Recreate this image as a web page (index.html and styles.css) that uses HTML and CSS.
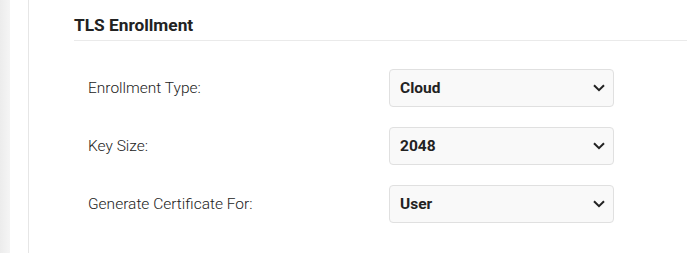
FILE: index.html
```html
<!DOCTYPE html>
<html lang="en">
<head>
  <meta charset="UTF-8"/>
  <title>TLS Enrollment</title>
  <link rel="stylesheet" href="styles.css">
</head>
<body>
  <div class="page">
    <div class="sidebar"></div>
    <div class="main">
      <div class="section">
        <h2 class="section-title">TLS Enrollment</h2>
        <div class="form">
          <div class="row">
            <label class="label">Enrollment Type:</label>
            <div class="select">
              <span>Cloud</span>
              <svg class="chev" width="12" height="8" viewBox="0 0 12 8"><path d="M1 1.2 L6 6.2 L11 1.2" fill="none" stroke="#222" stroke-width="2"/></svg>
            </div>
          </div>
          <div class="row">
            <label class="label">Key Size:</label>
            <div class="select">
              <span>2048</span>
              <svg class="chev" width="12" height="8" viewBox="0 0 12 8"><path d="M1 1.2 L6 6.2 L11 1.2" fill="none" stroke="#222" stroke-width="2"/></svg>
            </div>
          </div>
          <div class="row">
            <label class="label">Generate Certificate For:</label>
            <div class="select">
              <span>User</span>
              <svg class="chev" width="12" height="8" viewBox="0 0 12 8"><path d="M1 1.2 L6 6.2 L11 1.2" fill="none" stroke="#222" stroke-width="2"/></svg>
            </div>
          </div>
        </div>
      </div>
    </div>
  </div>
</body>
</html>
```

FILE: styles.css
```css
body {
  margin: 0;
  font-family: Roboto, "Liberation Sans", sans-serif;
  color: #333;
  background: #fff;
}
.page {
  display: flex;
  height: 253px;
  overflow: hidden;
}
.sidebar {
  width: 10px;
  background: linear-gradient(to right, #ececec, #f5f5f5);
}
.main {
  flex: 1;
  margin-left: 18px;
  border-left: 1px solid #e6e6e6;
  padding-left: 45px;
}
.section-title {
  margin: 0;
  padding-top: 15px;
  height: 25px;
  font-size: 17.3px;
  font-weight: 700;
  color: #222;
  border-bottom: 1px solid #eaeaea;
}
.form {
  padding: 28px 0 0 14px;
  display: flex;
  flex-direction: column;
  gap: 20px;
}
.row {
  display: flex;
  align-items: center;
}
.label {
  width: 301px;
  font-size: 15.5px;
  font-weight: 300;
  color: #222;
}
.select {
  width: 205px;
  height: 36px;
  border: 1px solid #e0e0e0;
  border-radius: 4px;
  background: #f9f9f9;
  display: flex;
  align-items: center;
  justify-content: space-between;
  padding: 0 8px 0 10px;
  font-size: 15.5px;
  font-weight: 700;
  color: #222;
}
.chev {
  display: block;
}
```
